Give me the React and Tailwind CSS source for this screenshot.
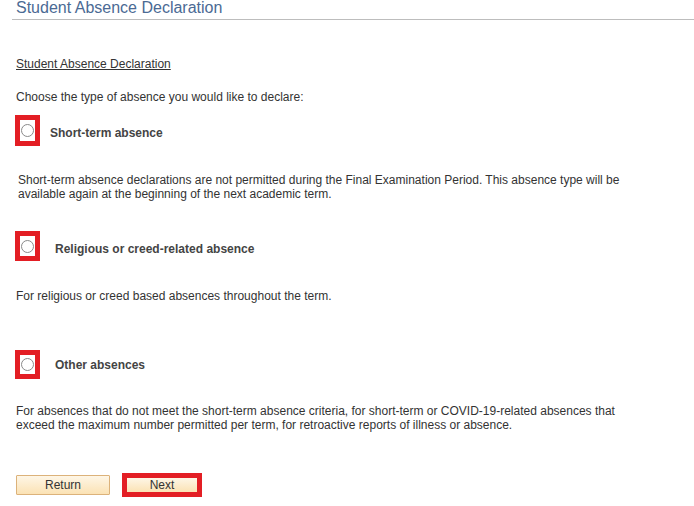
import React from 'react';

function RadioBox({ gap = 'ml-[10px]', label, heightClass = 'h-[31px]', labelShift = '' }) {
  return (
    <div className="flex items-center">
      <span className={`${heightClass} w-[25px] border-[5px] border-[#e31e24] bg-white flex items-center justify-center`}>
        <span className="w-[13px] h-[13px] rounded-full border border-[#8a8a8a] bg-white" />
      </span>
      <span className={`${gap} ${labelShift} text-[12px] font-bold text-[#444]`}>{label}</span>
    </div>
  );
}

export default function App() {
  return (
    <div className="w-[694px] h-[506px] bg-white text-[#333] font-['Liberation_Sans',Arial,sans-serif] text-[12px] leading-[14px] overflow-hidden">
      {/* Page title */}
      <div className="h-[21px] ml-3 pl-1 border-b border-[#bdbdbd]">
        <h1 className="text-[16px] leading-[17px] text-[#4b6a94] -mt-[1px]">Student Absence Declaration</h1>
      </div>

      <div className="pl-4">
        <p className="mt-[37px] underline">Student Absence Declaration</p>
        <p className="mt-[19px]">Choose the type of absence you would like to declare:</p>

        <div className="mt-[11px] -ml-[1px]">
          <RadioBox label="Short-term absence" labelShift="pt-[5px]" />
        </div>
        <p className="mt-[27px] pl-[2px]">
          Short-term absence declarations are not permitted during the Final Examination Period. This absence type will be
          <br />
          available again at the beginning of the next academic term.
        </p>

        <div className="mt-[30px] -ml-[1px]">
          <RadioBox label="Religious or creed-related absence" gap="ml-[15px]" heightClass="h-[30px]" labelShift="pt-[5px]" />
        </div>
        <p className="mt-[28px]">For religious or creed based absences throughout the term.</p>

        <div className="mt-[47px] -ml-[1px]">
          <RadioBox label="Other absences" gap="ml-[15px]" heightClass="h-[29px]" />
        </div>
        <p className="mt-[25px]">
          For absences that do not meet the short-term absence criteria, for short-term or COVID-19-related absences that
          <br />
          exceed the maximum number permitted per term, for retroactive reports of illness or absence.
        </p>

        <div className="mt-[41px] flex items-center">
          <button className="w-[94px] h-[20px] border border-[#dcb27a] rounded-[1px] bg-gradient-to-b from-[#fef6e6] to-[#fbe2b4] text-[12px] text-[#333]">
            Return
          </button>
          <span className="ml-[12px] border-[5px] border-[#e31e24]">
            <button className="block w-[70px] h-[14px] leading-[14px] bg-gradient-to-b from-[#fef6e6] to-[#fbe2b4] text-[12px] text-[#333]">
              Next
            </button>
          </span>
        </div>
      </div>
    </div>
  );
}
